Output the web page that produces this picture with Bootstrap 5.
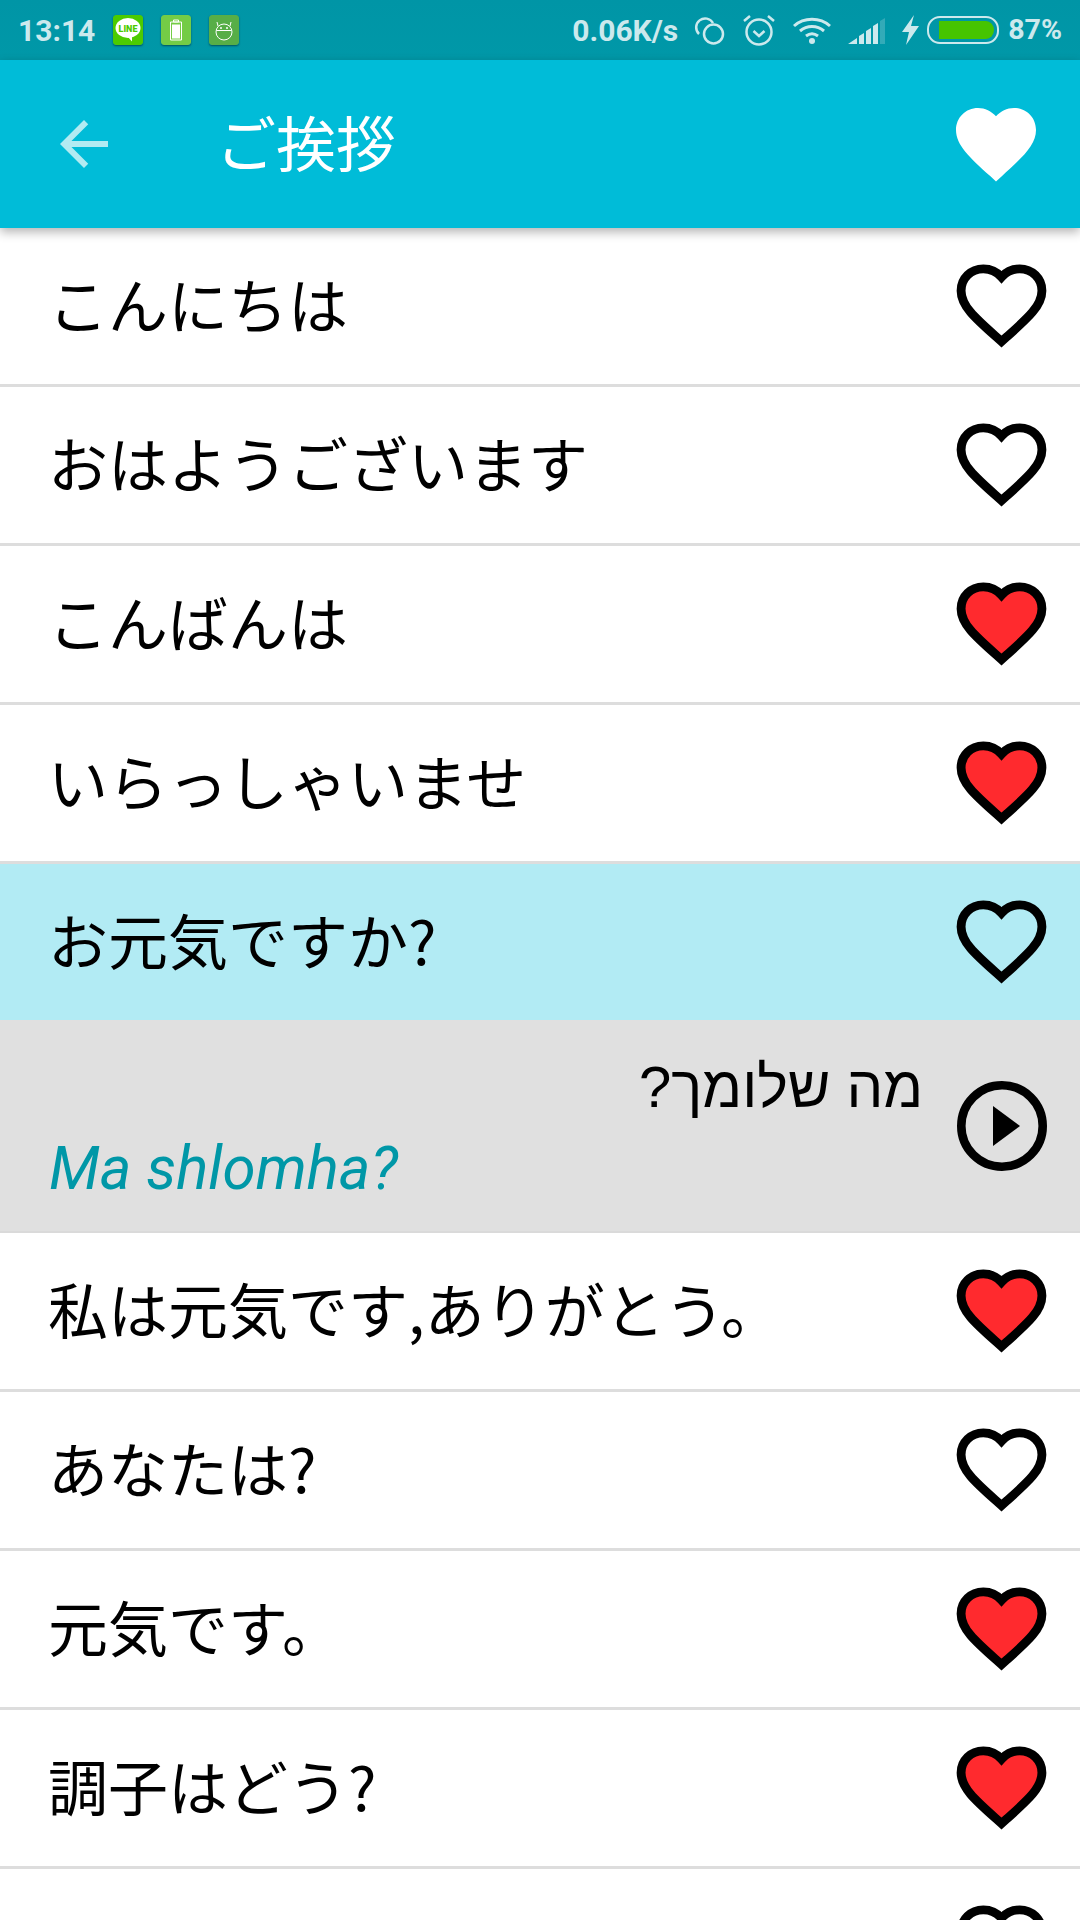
<!DOCTYPE html>
<html lang="ja">
  <head>
    <meta charset="UTF-8" />
    <meta name="viewport" content="width=device-width, initial-scale=1.0" />
    <title>ご挨拶</title>
    <link rel="stylesheet" href="https://cdn.jsdelivr.net/npm/bootstrap@5.3.3/dist/css/bootstrap.min.css" />
    <style>
      body {
        height: 1920px;
        overflow: hidden;
        font-family: "Noto Sans CJK JP", Roboto, sans-serif;
        color: #000;
      }
      .status-strip {
        height: 60px;
        background: linear-gradient(#0095a6, #0098a8);
        color: #cce9ed;
        font-family: Roboto, sans-serif;
        font-weight: 700;
        font-size: 30px;
        padding: 0 18px;
      }
      .status-strip .clock { font-size: 30px; margin-right: 18px; }
      .status-strip .percent { font-size: 28.5px; }
      .app-tile { width: 30px; height: 30px; border-radius: 3px; box-shadow: 0 1px 2px #00525c; margin-right: 18px; }
      .tray-gap { margin-right: 16px; }
      .bolt-gap { margin-right: 7px; }
      .cell-gap { margin-right: 9px; }
      .app-bar {
        height: 168px;
        background: #00bcd8;
        color: #fff;
        padding: 0 36px 0 48px;
        box-shadow: 0 4px 10px rgba(0, 0, 0, 0.3);
        position: relative;
        z-index: 2;
      }
      .app-bar h1 { font-size: 60px; font-weight: 400; margin: 0 0 6px 96px; line-height: 1; }
      .phrase-list { height: 1692px; overflow: hidden; }
      .phrase-row {
        height: 159px;
        padding: 0 30px 0 48px;
        font-size: 60px;
        line-height: 1;
        border-bottom: 3px solid #ddd;
        background: #fff;
      }
      .phrase-row.is-selected { height: 156px; background: #b2ebf4; border-bottom: 0; }
      .phrase-text { margin-bottom: 6px; }
      .phrase-open {
        height: 213px;
        background: #e0e0e0;
        border-bottom: 2px solid #dadada;
        padding: 0 33px 0 49px;
      }
      .hebrew-line {
        font-family: "Liberation Sans", sans-serif;
        font-size: 58px;
        line-height: 1;
        margin-top: 38px;
        padding-right: 34px;
      }
      .roman-line {
        font-family: Roboto, sans-serif;
        font-style: italic;
        font-size: 60px;
        line-height: 1;
        color: #0097a7;
        margin-top: 23px;
      }
      .heart-btn { width: 97px; height: 95px; flex: none; overflow: visible; margin-bottom: 3px; }
      .heart-line { stroke: #000; stroke-width: 2.2; fill: none; stroke-miterlimit: 8; }
      .heart-red { fill: #ff2a2e; }
    </style>
  </head>
  <body>
    <svg width="0" height="0" class="position-absolute">
      <symbol id="heart" viewBox="0 0 24 24" preserveAspectRatio="none">
        <path d="M12 21.35l-1.45-1.32C5.4 15.36 2 12.28 2 8.5 2 5.42 4.42 3 7.5 3c1.74 0 3.41.81 4.5 2.09C13.09 3.81 14.76 3 16.5 3 19.58 3 22 5.42 22 8.5c0 3.78-3.4 6.86-8.55 11.54L12 21.35z" />
      </symbol>
    </svg>

    <header>
      <div class="status-strip d-flex align-items-center">
        <span class="clock">13:14</span>
        <svg class="app-tile" viewBox="0 0 30 30">
          <rect width="30" height="30" rx="3" fill="#4ccb00" />
          <ellipse cx="15" cy="13" rx="12.500" ry="10" fill="#fff" />
          <path d="M14 21l5 5.500v-5.500z" fill="#fff" />
          <text x="15" y="16.500" font-size="9" font-weight="900" font-family="Roboto, sans-serif" text-anchor="middle" fill="#4ccb00">LINE</text>
        </svg>
        <svg class="app-tile" viewBox="0 0 30 30">
          <rect width="30" height="30" rx="3" fill="#74cc46" />
          <path d="M9.5 7h11v18h-11zM12.5 5h5v2h-5z" fill="none" stroke="#fff" />
          <rect x="11" y="9.500" width="8" height="14" fill="#fff" />
        </svg>
        <svg class="app-tile" viewBox="0 0 30 30">
          <rect width="30" height="30" rx="3" fill="#57ae47" />
          <circle cx="15" cy="17" r="8" fill="none" stroke="#fff" />
          <path d="M7.500 15.500h15" stroke="#fff" />
          <path d="M9 11l-1-4M21 11l1-4" stroke="#fff" />
          <circle cx="12" cy="13" r="1" fill="#fff" /><circle cx="18" cy="13" r="1" fill="#fff" />
        </svg>
        <span class="ms-auto tray-gap">0.06K/s</span>
        <svg class="tray-gap" width="32" height="32" viewBox="0 0 32 32" fill="none" stroke="#cce9ed" stroke-width="2.500">
          <circle cx="19.500" cy="20" r="9.500" />
          <path d="M5 20a9 9 0 1 1 14-11" />
        </svg>
        <svg class="tray-gap" width="34" height="34" viewBox="0 0 34 34" fill="none" stroke="#cce9ed" stroke-width="2.500">
          <circle cx="17" cy="19" r="12.500" />
          <path d="M11.500 18l5.500 5 5.500-5M2 8l6-5M32 8l-6-5" />
        </svg>
        <svg class="tray-gap" width="40" height="30" viewBox="0 0 40 30" fill="none" stroke="#cce9ed" stroke-width="3">
          <path d="M2 11c10-9 26-9 36 0M8 16c7-6 17-6 24 0M14 21c4-3 8-3 12 0" />
          <circle cx="20" cy="26" r="3" fill="#cce9ed" stroke="none" />
        </svg>
        <svg class="tray-gap" width="38" height="28" viewBox="0 0 38 28" fill="#cce9ed">
          <path d="M0 28l9-6v6zM11 20l5-3v11h-5zM18 15l5-3v16h-5zM25 10l5-3v21h-5z" />
          <path d="M32 5l5-3v26h-5z" opacity=".25" />
        </svg>
        <svg class="bolt-gap" width="18" height="30" viewBox="0 0 18 30" fill="#cce9ed">
          <path d="M12 0L0 17h7L4 30 17 11H9z" />
        </svg>
        <svg class="cell-gap" width="72" height="28" viewBox="0 0 72 28">
          <rect x="1" y="1" width="70" height="26" rx="12" fill="none" stroke="#cce9ed" stroke-width="2" />
          <path d="M12 5h47a8 9 0 0 1 8 9 8 9 0 0 1-8 9H12z" fill="#46c400" />
        </svg>
        <span class="percent">87%</span>
      </div>

      <nav class="app-bar d-flex align-items-center">
        <svg width="72" height="72" viewBox="0 0 24 24" fill="#b2ebf2">
          <path d="M20 11H7.830l5.590-5.590L12 4l-8 8 8 8 1.410-1.410L7.830 13H20v-2z" />
        </svg>
        <h1>ご挨拶</h1>
        <svg class="ms-auto" width="96" height="96" fill="#fff"><use href="#heart" /></svg>
      </nav>
    </header>

    <main>
      <ul class="phrase-list list-unstyled m-0">
        <li class="phrase-row d-flex align-items-center justify-content-between">
          <span class="phrase-text">こんにちは</span>
          <svg class="heart-btn heart-line"><use href="#heart" /></svg>
        </li>
        <li class="phrase-row d-flex align-items-center justify-content-between">
          <span class="phrase-text">おはようございます</span>
          <svg class="heart-btn heart-line"><use href="#heart" /></svg>
        </li>
        <li class="phrase-row d-flex align-items-center justify-content-between">
          <span class="phrase-text">こんばんは</span>
          <svg class="heart-btn heart-line heart-red"><use href="#heart" /></svg>
        </li>
        <li class="phrase-row d-flex align-items-center justify-content-between">
          <span class="phrase-text">いらっしゃいませ</span>
          <svg class="heart-btn heart-line heart-red"><use href="#heart" /></svg>
        </li>
        <li class="phrase-row is-selected d-flex align-items-center justify-content-between">
          <span class="phrase-text">お元気ですか?</span>
          <svg class="heart-btn heart-line"><use href="#heart" /></svg>
        </li>
        <li class="phrase-open d-flex align-items-center">
          <div class="flex-grow-1 align-self-start">
            <div class="hebrew-line" dir="rtl">מה שלומך?</div>
            <div class="roman-line">Ma shlomha?</div>
          </div>
          <svg class="flex-shrink-0" width="90" height="90" viewBox="0 0 90 90">
            <circle cx="45" cy="45" r="40.700" fill="none" stroke="#000" stroke-width="8.600" />
            <path d="M36 25l27 20-27 20z" />
          </svg>
        </li>
        <li class="phrase-row d-flex align-items-center justify-content-between">
          <span class="phrase-text">私は元気です,ありがとう。</span>
          <svg class="heart-btn heart-line heart-red"><use href="#heart" /></svg>
        </li>
        <li class="phrase-row d-flex align-items-center justify-content-between">
          <span class="phrase-text">あなたは?</span>
          <svg class="heart-btn heart-line"><use href="#heart" /></svg>
        </li>
        <li class="phrase-row d-flex align-items-center justify-content-between">
          <span class="phrase-text">元気です。</span>
          <svg class="heart-btn heart-line heart-red"><use href="#heart" /></svg>
        </li>
        <li class="phrase-row d-flex align-items-center justify-content-between">
          <span class="phrase-text">調子はどう?</span>
          <svg class="heart-btn heart-line heart-red"><use href="#heart" /></svg>
        </li>
        <li class="phrase-row d-flex align-items-center justify-content-end">
          <svg class="heart-btn heart-line"><use href="#heart" /></svg>
        </li>
      </ul>
    </main>
  </body>
</html>
